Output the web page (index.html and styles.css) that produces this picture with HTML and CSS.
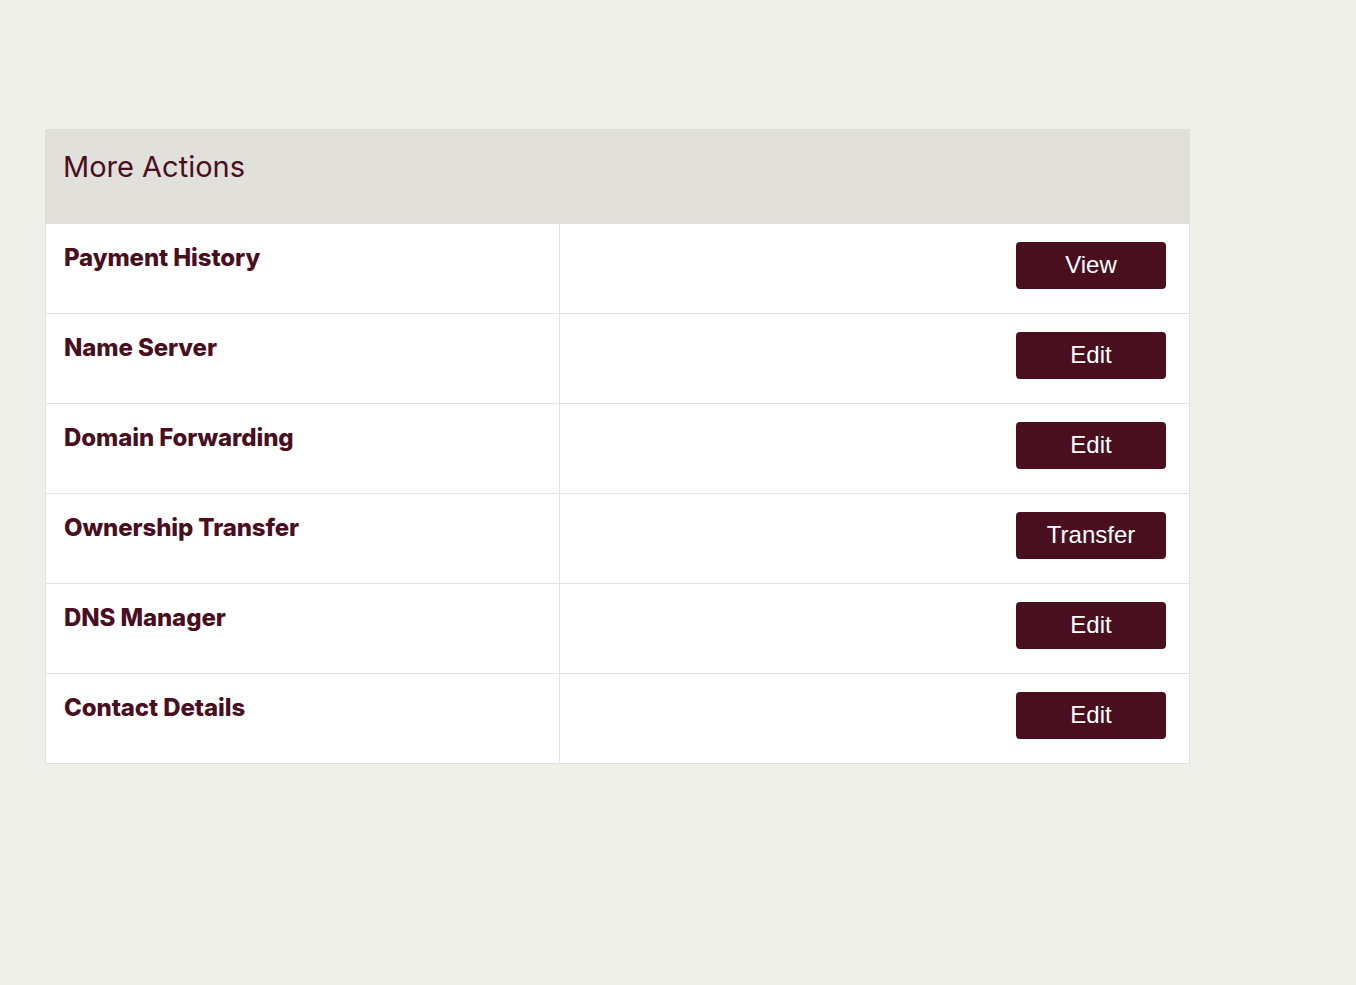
FILE: index.html
```html
<!DOCTYPE html>
<html>
<head>
<meta charset="utf-8">
<link rel="stylesheet" href="styles.css">
</head>
<body>
<div class="page">
  <section class="card">
    <div class="card-head">More Actions</div>
    <div class="row"><div class="label">Payment History</div><div class="action"><button class="btn">View</button></div></div>
    <div class="row"><div class="label">Name Server</div><div class="action"><button class="btn">Edit</button></div></div>
    <div class="row"><div class="label">Domain Forwarding</div><div class="action"><button class="btn">Edit</button></div></div>
    <div class="row"><div class="label">Ownership Transfer</div><div class="action"><button class="btn">Transfer</button></div></div>
    <div class="row"><div class="label">DNS Manager</div><div class="action"><button class="btn">Edit</button></div></div>
    <div class="row"><div class="label">Contact Details</div><div class="action"><button class="btn">Edit</button></div></div>
  </section>
</div>
</body>
</html>
```
FILE: styles.css
```css
html, body {
  margin: 0;
  padding: 0;
  background: #f0f0eb;
}
body {
  font-family: "Inter", "Liberation Sans", sans-serif;
  color: #4a0f1f;
}
.page {
  padding: 129px 0 0 45px;
}
.card {
  width: 1145px;
  box-sizing: border-box;
  border: 1px solid #e0e0de;
  background: #fff;
}
.card-head {
  background: #e1e0da;
  height: 95px;
  box-sizing: border-box;
  padding: 20px 18px 0;
  font-size: 29px;
  font-weight: 400;
  line-height: 36px;
  margin: -1px -1px 0;
}
.row {
  display: grid;
  grid-template-columns: 514px 1fr;
  height: 90px;
  box-sizing: border-box;
  border-top: 1px solid #e2e2e2;
}
.card-head + .row {
  border-top: none;
  height: 89px;
}
.label {
  border-right: 1px solid #e2e2e2;
  padding: 19px 18px 0;
  font-size: 24px;
  font-weight: 800;
  line-height: 30px;
  letter-spacing: -0.1px;
}
.action {
  display: flex;
  justify-content: flex-end;
  align-items: flex-start;
  padding: 18px 23px 0 0;
}
.btn {
  width: 150px;
  height: 47px;
  border: none;
  border-radius: 4px;
  background: #4a0f1f;
  color: #fff;
  font-family: "Liberation Sans", Arial, sans-serif;
  font-size: 24px;
  padding: 0 0 2px;
}
```
